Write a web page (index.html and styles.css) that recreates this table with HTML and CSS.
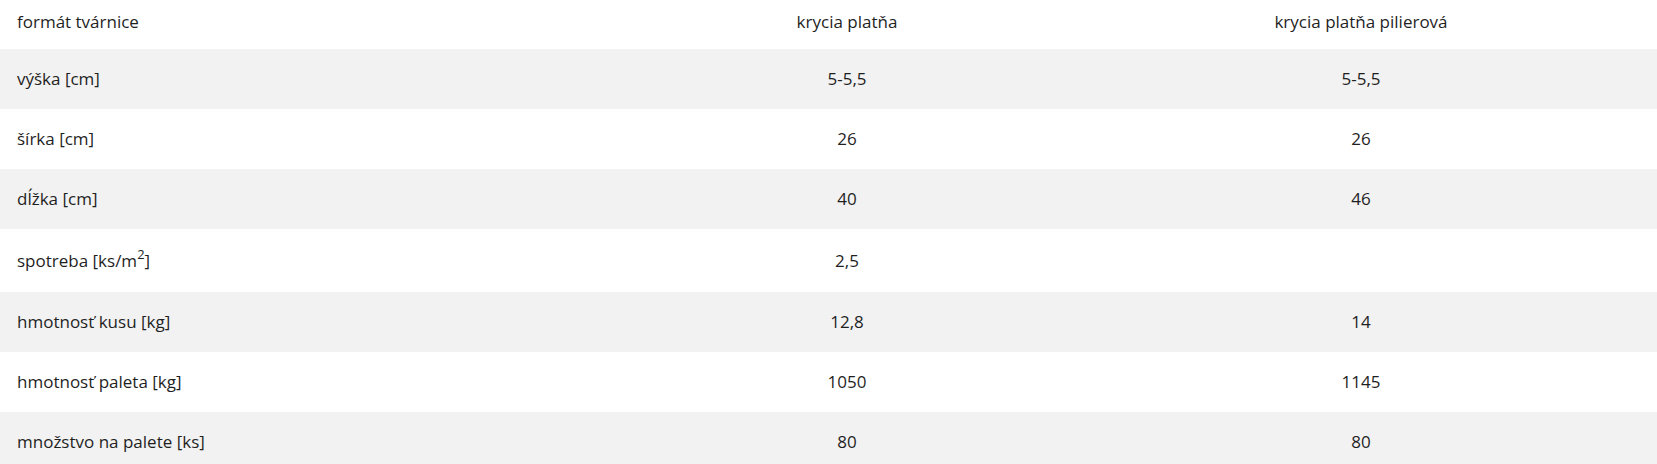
FILE: index.html
```html
<!DOCTYPE html>
<html lang="sk">
<head>
<meta charset="utf-8">
<title>Tabuľka</title>
<link rel="stylesheet" href="styles.css">
</head>
<body>
<table class="spec">
  <colgroup>
    <col class="c1"><col class="c2"><col class="c3">
  </colgroup>
  <thead>
    <tr><th class="label">formát tvárnice</th><th>krycia platňa</th><th>krycia platňa pilierová</th></tr>
  </thead>
  <tbody>
    <tr><td class="label">výška [cm]</td><td>5-5,5</td><td>5-5,5</td></tr>
    <tr><td class="label">šírka [cm]</td><td>26</td><td>26</td></tr>
    <tr><td class="label">dĺžka [cm]</td><td>40</td><td>46</td></tr>
    <tr class="tall"><td class="label">spotreba [ks/m<sup>2</sup>]</td><td>2,5</td><td></td></tr>
    <tr><td class="label">hmotnosť kusu [kg]</td><td>12,8</td><td>14</td></tr>
    <tr><td class="label">hmotnosť paleta [kg]</td><td>1050</td><td>1145</td></tr>
    <tr><td class="label">množstvo na palete [ks]</td><td>80</td><td>80</td></tr>
  </tbody>
</table>
</body>
</html>
```
FILE: styles.css
```css
html, body {
  margin: 0;
  padding: 0;
  background: #fff;
}
body {
  font-family: "Open Sans", "Noto Sans", "Liberation Sans", sans-serif;
  font-size: 17px;
  color: #1f1f1f;
}
.spec {
  width: 1657px;
  border-collapse: collapse;
  table-layout: fixed;
}
.c1 { width: 629px; }
.c2 { width: 436px; }
.c3 { width: 592px; }
.spec th, .spec td {
  font-weight: normal;
  text-align: center;
  line-height: 24px;
  padding: 18px 17px;
  vertical-align: middle;
}
.spec th {
  padding-top: 10px;
  padding-bottom: 15px;
}
.spec .label {
  text-align: left;
}
.spec tbody tr:nth-child(odd) {
  background: #f2f2f2;
}
.spec .tall td {
  padding-top: 20px;
  padding-bottom: 19px;
}
.spec sup {
  font-size: 13px;
  line-height: 0;
  vertical-align: 8px;
}
```
